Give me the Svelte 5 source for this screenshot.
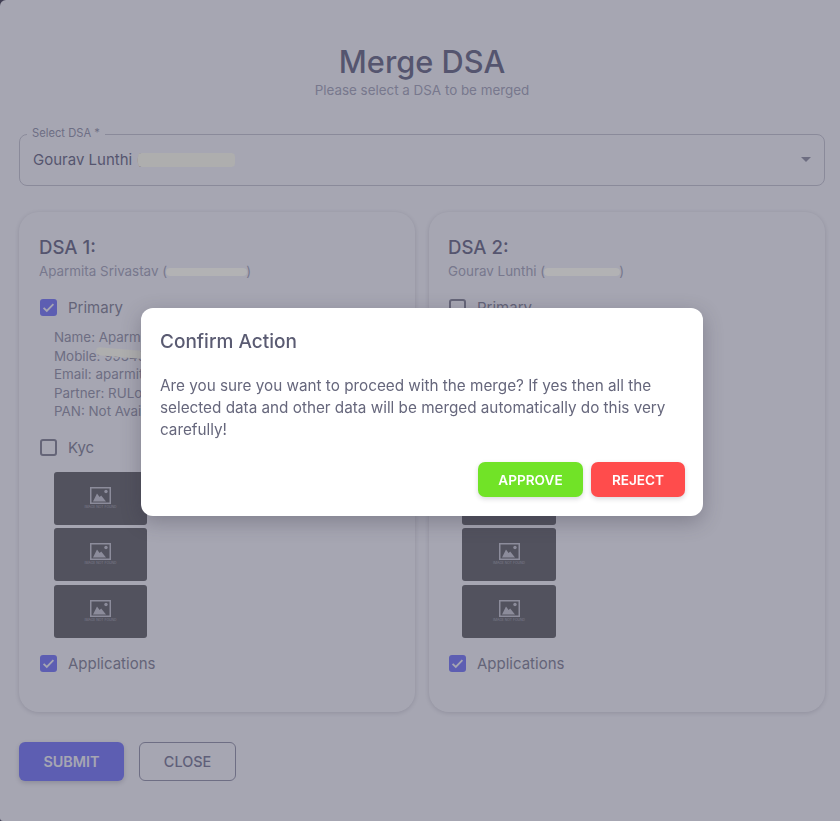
<script lang="ts">
	const cards = [
		{
			title: 'DSA 1:',
			name: 'Aparmita Srivastav',
			redactWidth: 81,
			primary: true,
			details: [
				'Name: Aparmita Srivastav',
				'Mobile: 9934914000',
				'Email: aparmita@gmail.com',
				'Partner: RULoans',
				'PAN: Not Available'
			]
		},
		{
			title: 'DSA 2:',
			name: 'Gourav Lunthi',
			redactWidth: 76,
			primary: false,
			details: [
				'Name: Gourav Lunthi',
				'Mobile: 9780191570',
				'Email: gourav@gmail.com',
				'Partner: RULoans',
				'PAN: Not Available'
			]
		}
	];
</script>

{#snippet check(checked: boolean)}
	<span class="box" class:checked>
		{#if checked}
			<svg viewBox="0 0 17 17" width="17" height="17">
				<path d="M3.6 8.8l3.2 3.2 6.6-6.8" fill="none" stroke="#fff" stroke-width="1.8" />
			</svg>
		{/if}
	</span>
{/snippet}

{#snippet placeholder()}
	<div class="thumb">
		<svg viewBox="0 0 21 17" width="21" height="17">
			<rect x="0.75" y="0.75" width="19.5" height="15.5" fill="none" stroke="#c9c9cf" stroke-width="1.5" />
			<path d="M3 14.5l4-8 2.6 3.6 1.6-1.6 4.8 6z" fill="#c9c9cf" />
			<circle cx="16" cy="4.5" r="1.7" fill="#c9c9cf" />
		</svg>
		<span class="thumb-text">IMAGE NOT FOUND</span>
	</div>
{/snippet}

<div class="page">
	<header class="head">
		<h1>Merge DSA</h1>
		<p>Please select a DSA to be merged</p>
	</header>

	<div class="select">
		<span class="select-label">Select DSA *</span>
		<span class="select-value">Gourav Lunthi (<span class="redact select-redact"></span></span>
		<span class="caret"></span>
	</div>

	<div class="cards">
		{#each cards as card}
			<section class="card">
				<h2>{card.title}</h2>
				<p class="name">{card.name} (<span class="redact" style="width: {card.redactWidth}px"></span>)</p>

				<div class="row first">
					{@render check(card.primary)}
					<span>Primary</span>
				</div>
				<div class="details">
					{#each card.details as line, i}
						<div>
							{line}
							{#if i === 1 && card.primary}<span class="redact mobile-redact"></span>{/if}
						</div>
					{/each}
				</div>

				<div class="row">
					{@render check(false)}
					<span>Kyc</span>
				</div>
				<div class="thumbs">
					{@render placeholder()}
					{@render placeholder()}
					{@render placeholder()}
				</div>

				<div class="row last">
					{@render check(true)}
					<span>Applications</span>
				</div>
			</section>
		{/each}
	</div>

	<div class="actions">
		<button class="submit">SUBMIT</button>
		<button class="close">CLOSE</button>
	</div>
</div>

<div class="backdrop"></div>

<div class="modal">
	<h3>Confirm Action</h3>
	<p>Are you sure you want to proceed with the merge? If yes then all the selected data and other data will be merged automatically do this very carefully!</p>
	<div class="modal-actions">
		<button class="approve">APPROVE</button>
		<button class="reject">REJECT</button>
	</div>
</div>

<style>
	:global(body) {
		margin: 0;
		background: #2f2b3d;
		font-family: Inter, 'Noto Sans', sans-serif;
	}

	.page {
		box-sizing: border-box;
		height: 821px;
		padding: 44px 15px 0 19px;
		background: #fff;
		border-radius: 6px 0 0 3px;
		color: #5a5a75;
		overflow: hidden;
	}

	.head {
		text-align: center;
	}

	h1 {
		margin: 0;
		font-size: 30.75px;
		line-height: 36px;
		font-weight: 500;
	}

	.head p {
		margin: 1px 0 0;
		font-size: 13.4px;
		line-height: 18px;
		color: #a0a1b3;
	}

	.select {
		position: relative;
		display: flex;
		align-items: center;
		justify-content: space-between;
		box-sizing: border-box;
		height: 52px;
		margin-top: 35px;
		padding: 0 14px 1px 13px;
		border: 1px solid #c6c6ce;
		border-radius: 8px;
	}

	.select-label {
		position: absolute;
		top: -8px;
		left: 7px;
		padding: 0 5px;
		background: #fff;
		font-size: 11.2px;
		line-height: 13px;
		color: #8b8ca1;
	}

	.select-value {
		font-size: 15px;
	}

	.caret {
		width: 0;
		height: 0;
		margin-right: -1px;
		border-left: 5px solid transparent;
		border-right: 5px solid transparent;
		border-top: 5px solid #8b8b9b;
	}

	.redact {
		position: relative;
		z-index: 11;
		display: inline-block;
		height: 8px;
		margin: 0 -1px;
		vertical-align: 0;
		background: #b2b2b4;
		border-radius: 4px;
	}

	.select-redact {
		width: 97px;
		height: 14px;
		margin-left: -4px;
		vertical-align: -2px;
		background: #aeaeae;
	}

	.mobile-redact {
		position: absolute;
		left: 43px;
		width: 47px;
		height: 8px;
		margin-top: 2px;
		background: #aeaeae;
		transform: rotate(5deg);
	}

	.cards {
		display: grid;
		grid-template-columns: 1fr 1fr;
		gap: 14px;
		margin-top: 26px;
	}

	.card {
		box-sizing: border-box;
		height: 500px;
		padding: 24px 20px 0;
		border-radius: 20px;
		background: #fff;
		box-shadow: 0 1px 5px rgba(47, 43, 61, 0.22);
	}

	.card:last-child {
		padding-left: 19px;
	}

	h2 {
		margin: 0;
		font-size: 18.6px;
		line-height: 22px;
		font-weight: 500;
	}

	.name {
		margin: 4px 0 0;
		font-size: 13.4px;
		line-height: 18px;
		color: #a0a1b3;
	}

	.row {
		display: flex;
		align-items: center;
		gap: 11px;
		height: 20px;
		margin-top: 17px;
		font-size: 15px;
		color: #777789;
	}

	.row {
		padding-left: 1px;
	}

	.row.first {
		margin-top: 17px;
	}

	.row.last {
		margin-top: 16px;
	}

	.box {
		flex: none;
		box-sizing: border-box;
		width: 17px;
		height: 17px;
		border: 2px solid #797989;
		border-radius: 3px;
	}

	.box.checked {
		border: none;
		background: #696cff;
	}

	.box svg {
		display: block;
	}

	.details {
		position: relative;
		margin: 11px 0 0 15px;
		font-size: 13.4px;
		line-height: 18.5px;
		color: #8b8b9d;
	}

	.thumbs {
		display: flex;
		flex-direction: column;
		gap: 3.5px;
		margin: 14px 0 0 15px;
	}

	.card:last-child .thumbs {
		margin-left: 14px;
	}

	.thumb {
		display: flex;
		flex-direction: column;
		align-items: center;
		justify-content: center;
		gap: 1px;
		width: 93px;
		height: 53px;
		border-radius: 3px;
		background: #525252;
	}

	.card:last-child .thumb {
		width: 94px;
	}

	.thumb svg {
		display: block;
	}

	.thumb-text {
		font-size: 3.4px;
		line-height: 5px;
		color: #a6a6ae;
		white-space: nowrap;
	}

	.actions {
		display: flex;
		gap: 15px;
		margin-top: 30px;
	}

	button {
		box-sizing: border-box;
		font-family: inherit;
		font-size: 14.4px;
		font-weight: 600;
		border: none;
		cursor: pointer;
	}

	.submit {
		width: 105px;
		height: 39px;
		border-radius: 6px;
		background: #696cff;
		color: #fff;
		box-shadow: 0 2px 5px rgba(47, 43, 61, 0.25);
	}

	.close {
		width: 97px;
		height: 39px;
		border: 1px solid #8d8da0;
		border-radius: 6px;
		background: transparent;
		color: #6e6e8a;
		font-weight: 500;
	}

	.backdrop {
		position: fixed;
		inset: 0;
		z-index: 10;
		background: rgba(82, 82, 105, 0.513);
	}

	.modal {
		position: fixed;
		top: 308px;
		left: 141px;
		z-index: 20;
		box-sizing: border-box;
		width: 562px;
		height: 208px;
		padding: 22px 18px 0 19px;
		border-radius: 12px;
		background: #fff;
		color: #5a5b72;
		box-shadow: 0 6px 20px rgba(47, 43, 61, 0.3);
	}

	h3 {
		margin: 0;
		font-size: 19px;
		line-height: 24px;
		font-weight: 500;
	}

	.modal p {
		margin: 21px 0 0;
		font-size: 15.28px;
		line-height: 22px;
		color: #66677c;
	}

	.modal-actions {
		display: flex;
		justify-content: flex-end;
		gap: 8px;
		margin-top: 21px;
	}

	.approve,
	.reject {
		height: 35px;
		border-radius: 7px;
		color: #fff;
		font-size: 13.6px;
		box-shadow: 0 2px 5px rgba(47, 43, 61, 0.18);
	}

	.approve {
		width: 105px;
		background: #71e327;
	}

	.reject {
		width: 94px;
		background: #ff4c4c;
	}
</style>
